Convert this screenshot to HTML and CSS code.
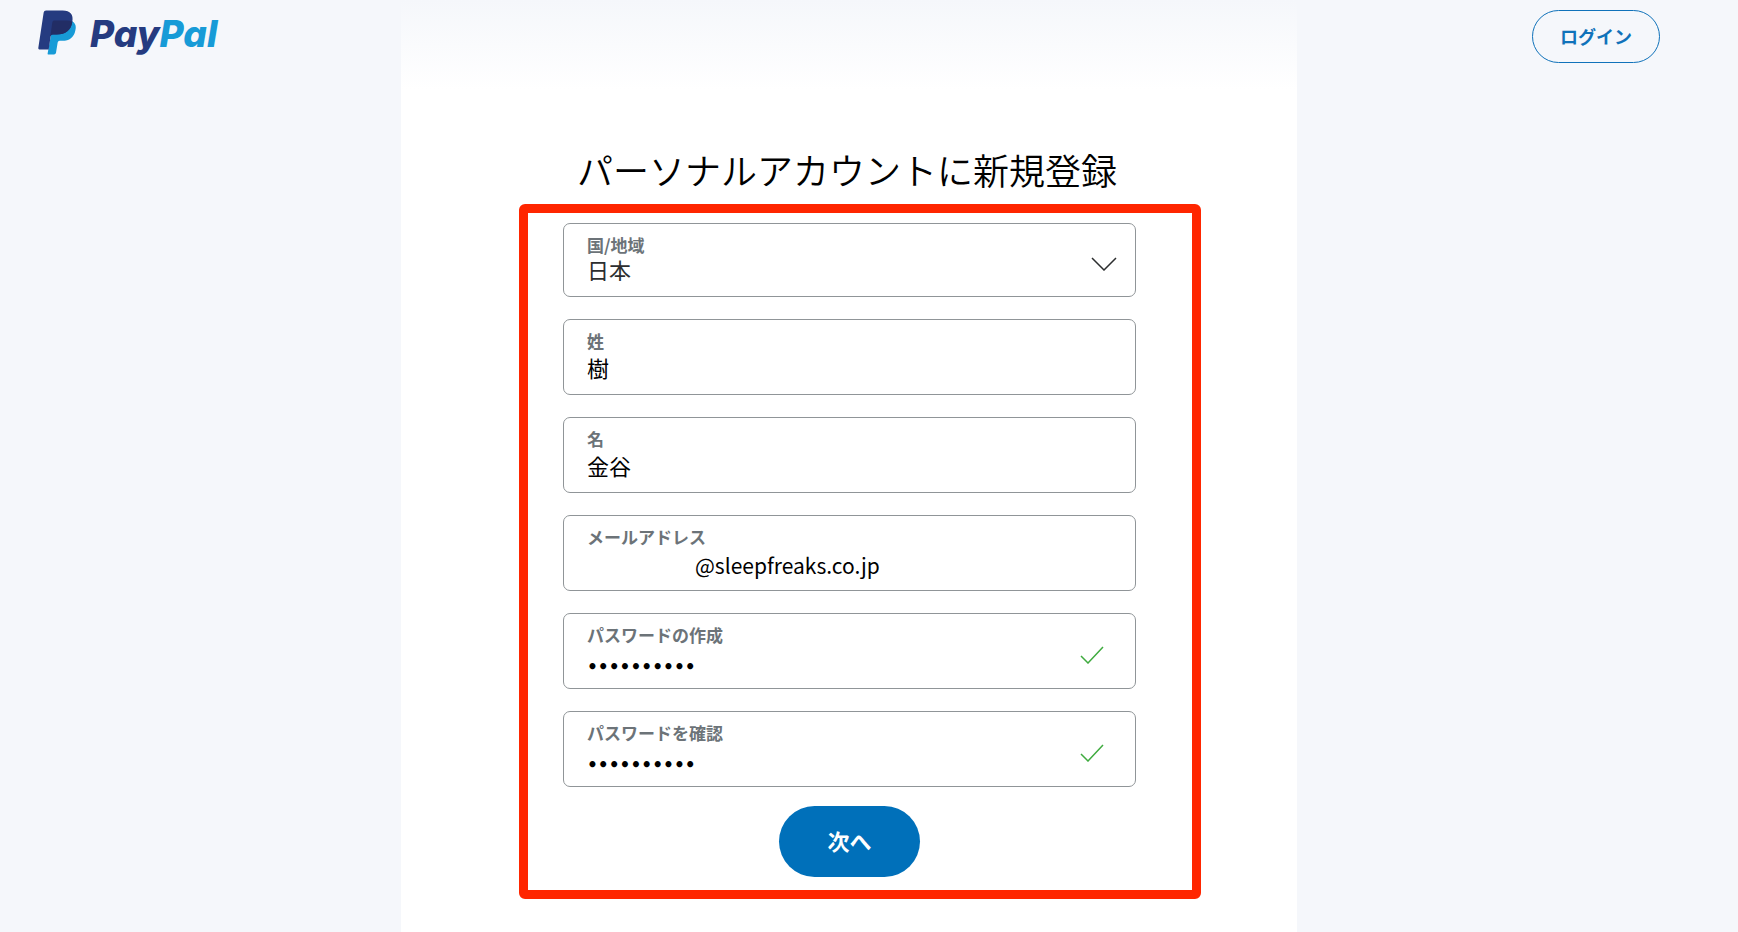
FILE: index.html
```html
<!DOCTYPE html>
<html lang="ja">
<head>
  <meta charset="UTF-8">
  <meta name="viewport" content="width=device-width, initial-scale=1.0">
  <title>PayPal</title>
  <link rel="stylesheet" href="styles.css">
</head>

<body>
  <div class="page">
    <!-- ロゴ -->
    <header class="side">
      <a class="logo" href="#" aria-label="PayPal">
        <svg class="logo-mark" viewBox="54 29 114 134" aria-hidden="true">
          <path fill="#179bd7" d="M101 60H150L157 62C167 69 169 77 166 90C162 111 148 121 127 121H119Q114 121 113 126L108 157Q107 162 102 162H86Q82 162 83 158Z"/>
          <path fill="#253b80" d="M78 30H128C151 30 161 42 157 64C153 90 137 102 110 102H98Q93 102 92 107L86 147H58Q54 147 55 142L71 36Q72 30 78 30Z"/>
          <path fill="#222d65" d="M102 60H140Q150 60 157 64C153 90 137 102 110 102H98Q93 102 91 108L97 65Q98 60 102 60Z"/>
        </svg>
        <span class="logo-text">Pay<span class="logo-pal">Pal</span></span>
      </a>
    </header>

    <!-- 登録フォーム -->
    <main class="panel">
      <h1>パーソナルアカウントに新規登録</h1>

      <form class="signup">
        <div class="field field-select">
          <div class="field-body">
            <label for="country">国/地域</label>
            <select id="country">
              <option value="JP">日本</option>
            </select>
          </div>
          <svg class="icon chevron" viewBox="0 0 26 14" aria-hidden="true">
            <path d="M1 1L13 13L25 1"/>
          </svg>
        </div>

        <div class="field">
          <div class="field-body">
            <label for="sei">姓</label>
            <input type="text" id="sei" value="樹">
          </div>
        </div>

        <div class="field">
          <div class="field-body">
            <label for="mei">名</label>
            <input type="text" id="mei" value="金谷">
          </div>
        </div>

        <div class="field">
          <div class="field-body">
            <label for="email">メールアドレス</label>
            <input type="email" id="email" value="@sleepfreaks.co.jp">
          </div>
        </div>

        <div class="field">
          <div class="field-body">
            <label for="password">パスワードの作成</label>
            <input type="password" id="password" value="abcdefghij">
          </div>
          <svg class="icon check" viewBox="0 0 24 18" aria-hidden="true">
            <path d="M1 10L8 17L23 1"/>
          </svg>
        </div>

        <div class="field">
          <div class="field-body">
            <label for="confirm">パスワードを確認</label>
            <input type="password" id="confirm" value="abcdefghij">
          </div>
          <svg class="icon check" viewBox="0 0 24 18" aria-hidden="true">
            <path d="M1 10L8 17L23 1"/>
          </svg>
        </div>

        <button type="button" class="next">次へ</button>
      </form>
    </main>

    <!-- ログイン -->
    <nav class="side side-right">
      <a class="login" href="#">ログイン</a>
    </nav>
  </div>
</body>
</html>
```
FILE: styles.css
```css
* {
  box-sizing: border-box;
}

body {
  margin: 0;
  background-color: #f5f7fb;
  color: #000;
  font-family: "Noto Sans CJK JP", sans-serif;
}

/* 3カラムのレイアウト */
.page {
  display: grid;
  grid-template-columns: 1fr minmax(0, 896px) 1fr;
  min-height: 100vh;
  padding-right: 40px;
}

.side {
  padding: 10px 38px;
}

.side-right {
  display: flex;
  justify-content: flex-end;
  align-items: flex-start;
}

/* ロゴ */
.logo {
  display: inline-flex;
  align-items: flex-start;
  gap: 14px;
  color: #253b80;
  text-decoration: none;
}

.logo-mark {
  width: 38px;
  height: 45px;
}

.logo-text {
  font-family: Inter, sans-serif;
  font-size: 37px;
  font-weight: 800;
  font-style: italic;
  line-height: 48px;
}

.logo-pal {
  color: #179bd7;
}

/* ログインボタン */
.login {
  padding: 0 27px;
  border: 1px solid #1072ba;
  border-radius: 27px;
  color: #1072ba;
  font-size: 18px;
  font-weight: 700;
  line-height: 51px;
  text-decoration: none;
  white-space: nowrap;
}

/* 中央のパネル */
.panel {
  padding: 145px 96px 32px 118px;
  background: linear-gradient(#f5f7fb, #fff 90px);
}

h1 {
  margin: 0 26px 11px 0;
  font-size: 36px;
  font-weight: 350;
  line-height: 48px;
  text-align: center;
}

/* 赤枠のフォーム */
.signup {
  display: flex;
  flex-direction: column;
  gap: 22px;
  padding: 10px 56px 13px 35px;
  border: 9px solid #ff2600;
  border-radius: 6px;
}

/* 入力欄 */
.field {
  display: flex;
  align-items: center;
  padding: 9px 31px 9px 23px;
  border: 1px solid #909598;
  border-radius: 7px;
  background-color: #fff;
}

.field-select {
  padding: 9px 18px 15px 23px;
}

.field-body {
  flex: 1;
  min-width: 0;
}

label {
  display: block;
  color: #6c7378;
  font-size: 17px;
  font-weight: 700;
  line-height: 24px;
}

input,
select {
  display: block;
  width: 100%;
  height: 32px;
  margin: 0;
  padding: 0 0 4px;
  border: 0;
  outline: none;
  background: transparent;
  color: #000;
  font-family: inherit;
  font-size: 22px;
}

select {
  height: 28px;
  margin-top: -4px;
  padding: 0;
  appearance: none;
  color: #2c2e2f;
}

/* ユーザー名の部分は空けておく */
input[type="email"] {
  padding: 0;
  font-size: 21px;
  text-indent: 108px;
}

input[type="password"] {
  padding: 8px 0 0;
  font-family: "DejaVu Sans", sans-serif;
  font-size: 17px;
  font-weight: 700;
}

/* アイコン */
.icon {
  margin-top: 8px;
  fill: none;
  stroke-width: 1.5;
}

.chevron {
  width: 26px;
  height: 14px;
  margin-top: 14px;
  stroke: #2c2e2f;
}

.check {
  width: 24px;
  height: 18px;
  stroke: #3fab3f;
}

/* 次へボタン */
.next {
  align-self: center;
  width: 141px;
  height: 71px;
  margin-top: -3px;
  padding: 0 0 4px;
  border: 0;
  border-radius: 36px;
  background-color: #0070ba;
  color: #fff;
  font-family: inherit;
  font-size: 22px;
  font-weight: 700;
  cursor: pointer;
}
```
